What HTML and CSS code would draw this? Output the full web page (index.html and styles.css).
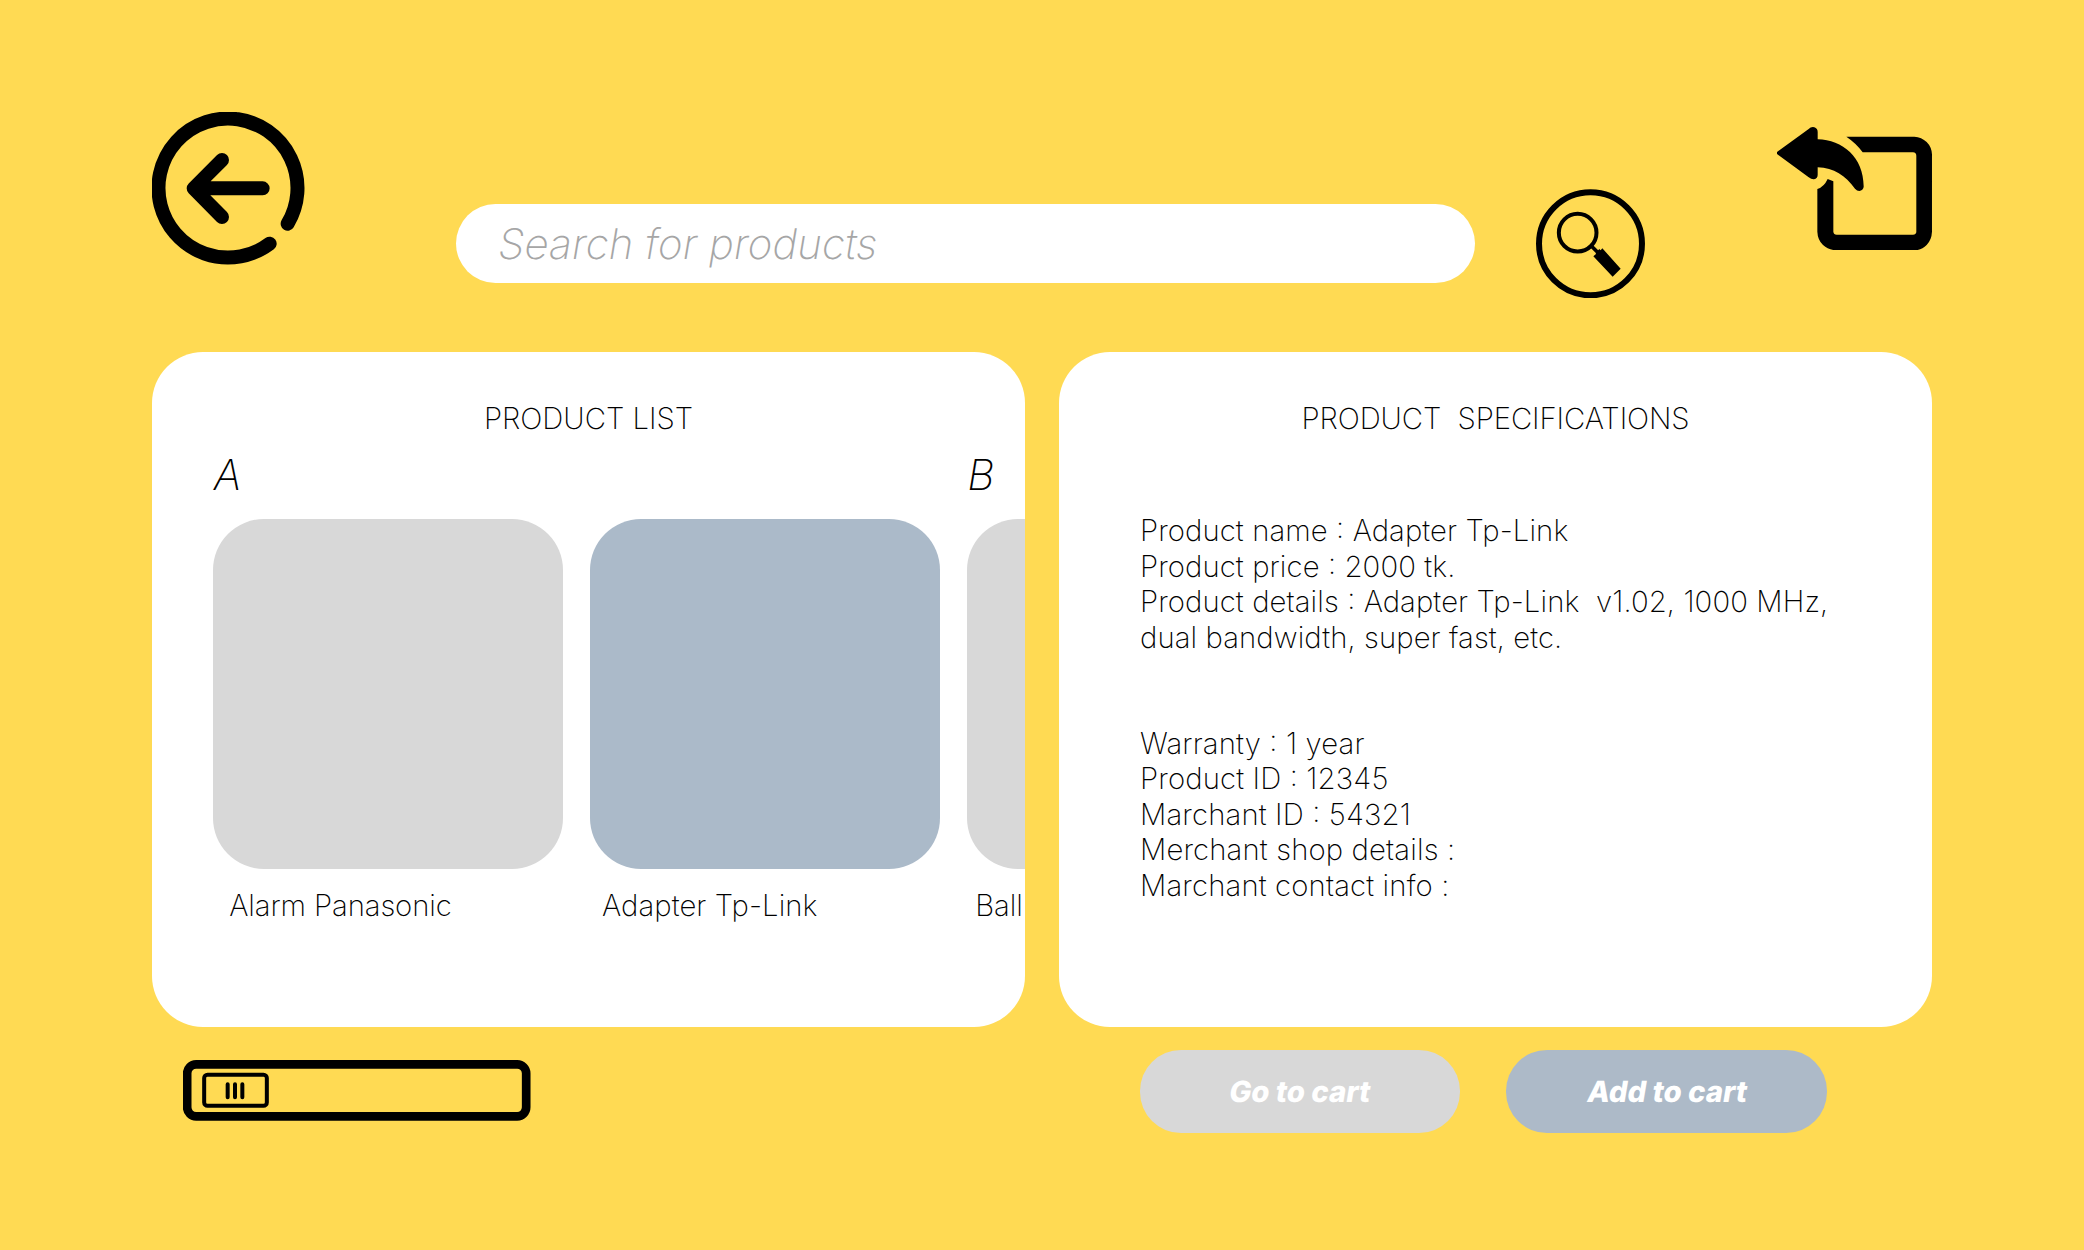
FILE: index.html
```html
<!DOCTYPE html>
<html lang="en">
<head>
<meta charset="utf-8">
<title>Products</title>
<link rel="stylesheet" href="styles.css">
</head>
<body>
<header class="topbar">
  <svg class="back" viewBox="36 36 459 459" fill="none" stroke="#000" stroke-width="42" stroke-linecap="round" stroke-linejoin="round">
    <path d="M443 371A208.500 208.500 0 1 0 389 431"/>
    <path d="M246 180L161 265L246 351M161 265H368"/>
  </svg>
  <div class="search"><span class="placeholder slanted">Search for products</span></div>
  <svg class="find" viewBox="48 41 327 328" fill="none" stroke="#000">
    <circle cx="211.500" cy="205.500" r="154.500" stroke-width="18"/>
    <circle cx="173" cy="172" r="56.500" stroke-width="12"/>
    <path d="M211 209L236 234" stroke-width="11"/>
    <path d="M220 243L228 236L227 232L238 221L242 225L247 219L302 280L278 304Z" fill="#000" stroke="none"/>
  </svg>
  <svg class="exit" viewBox="51 50 465 370">
    <path d="M259 79H463Q485 80 500 95T516 132V364Q515 388 500 404T463 420H228Q205 419 189 404T172 364V236Q192 230 203 206L220 213V364Q221 373 230 373H459Q469 372 469 364V136Q469 127 459 126H308Q289 99 259 79Z"/>
    <path d="M51 125L145 57Q154 48 163 51Q173 54 173 65V87C248 88 312 142 311 230Q309 241 298 242Q291 242 285 235C256 196 222 172 173 171V193Q173 204 162 207Q155 208 145 200L51 131Z"/>
  </svg>
</header>
<main class="panels">
  <section class="panel">
    <h2 class="title">PRODUCT LIST</h2>
    <div class="items">
      <article class="item"><div class="letter">A</div><div class="tile"></div><div class="name">Alarm Panasonic</div></article>
      <article class="item item-b"><div class="letter"></div><div class="tile selected"></div><div class="name">Adapter Tp-Link</div></article>
      <article class="item item-c"><div class="letter">B</div><div class="tile"></div><div class="name">Ball</div></article>
    </div>
  </section>
  <section class="panel">
    <h2 class="title title-specs">PRODUCT  SPECIFICATIONS</h2>
    <div class="specs">
      <p class="lines">Product name : Adapter Tp-Link
Product price : 2000 tk.
Product details : Adapter Tp-Link  v1.02, 1000 MHz,
dual bandwidth, super fast, etc.</p>
      <p class="lines seller">Warranty : 1 year
Product ID : 12345
Marchant ID : 54321
Merchant shop details :
Marchant contact info :</p>
    </div>
  </section>
</main>
<footer class="footer">
  <svg class="slider" viewBox="40 45 1043 182" fill="none" stroke="#000">
    <rect x="52.500" y="58" width="1017" height="156" rx="27" stroke-width="26"/>
    <rect x="103.500" y="89" width="188" height="93.500" rx="10" stroke-width="12"/>
    <path d="M174 118V157M196 118V157M218 118V157" stroke-width="12" stroke-linecap="round"/>
  </svg>
  <div class="actions">
    <button class="button"><span class="slanted">Go to cart</span></button>
    <button class="button primary"><span class="slanted">Add to cart</span></button>
  </div>
</footer>
</body>
</html>
```
FILE: styles.css
```css
* { box-sizing: border-box; }
body {
  margin: 0;
  width: 2084px;
  height: 1250px;
  padding: 112px 152px 0;
  overflow: hidden;
  background: #ffda53;
  color: #000;
  font: 200 29.300px/35.450px Inter, sans-serif;
  font-feature-settings: "calt" 1;
}
svg { display: block; flex: none; }
/* Slanted upright letterforms, sheared from the baseline */
.slanted { display: inline-block; transform: skewX(-9.400deg); transform-origin: 50% 60%; }
.topbar { display: flex; align-items: flex-start; height: 240px; }
.back { width: 153px; height: 153px; }
.search {
  display: flex;
  align-items: center;
  width: 1019px;
  height: 79px;
  margin: 92px 0 0 151px;
  padding: 0 0 1px 42px;
  border-radius: 40px;
  background: #fff;
}
.placeholder { color: #a6a6a6; font-size: 42.200px; line-height: 51px; }
.find { width: 109px; height: 109.300px; margin: 76.700px 0 0 61px; }
.exit { width: 155px; height: 123.300px; margin: 14.700px 0 0 auto; }
.panels { display: grid; grid-template-columns: 873px 873px; justify-content: space-between; }
.panel { height: 674.600px; padding-top: 49px; border-radius: 51px; background: #fff; overflow: hidden; }
.title { margin: 0; font: inherit; font-feature-settings: inherit; text-align: center; white-space: pre; }
.title-specs { letter-spacing: -0.080px; }
.items { display: flex; gap: 27.300px; margin: 12.400px 0 0 60.700px; }
.item { flex: none; width: 350px; }
.letter { height: 69.700px; padding-left: 1px; font-size: 42.200px; line-height: 51px; font-style: italic; }
.item-c .letter { padding-left: 0; }
.tile { height: 350px; border-radius: 51px; background: #d8d8d8; }
.tile.selected { background: #abbac9; }
.name { margin: 19.700px 0 0 16.500px; letter-spacing: -0.100px; }
.item-b .name { margin-left: 12px; letter-spacing: 0.080px; }
.item-c .name { margin-left: 8px; }
.specs { margin: 76.800px 0 0 81px; }
.lines { margin: 0 0 70.900px; white-space: pre; letter-spacing: 0.090px; }
.seller { letter-spacing: 0.140px; }
.footer { display: flex; justify-content: space-between; align-items: flex-start; padding: 23.400px 105px 0 31.300px; }
.slider { width: 347.700px; height: 60.700px; margin-top: 10px; }
.actions { display: flex; gap: 46px; }
.button {
  width: 320.700px;
  height: 83px;
  padding: 0;
  border: 0;
  border-radius: 41px;
  background: #d8d8d8;
  color: #fff;
  font: 800 29.300px/35.450px Inter, sans-serif;
}
.button.primary { background: #adbac8; }
```
